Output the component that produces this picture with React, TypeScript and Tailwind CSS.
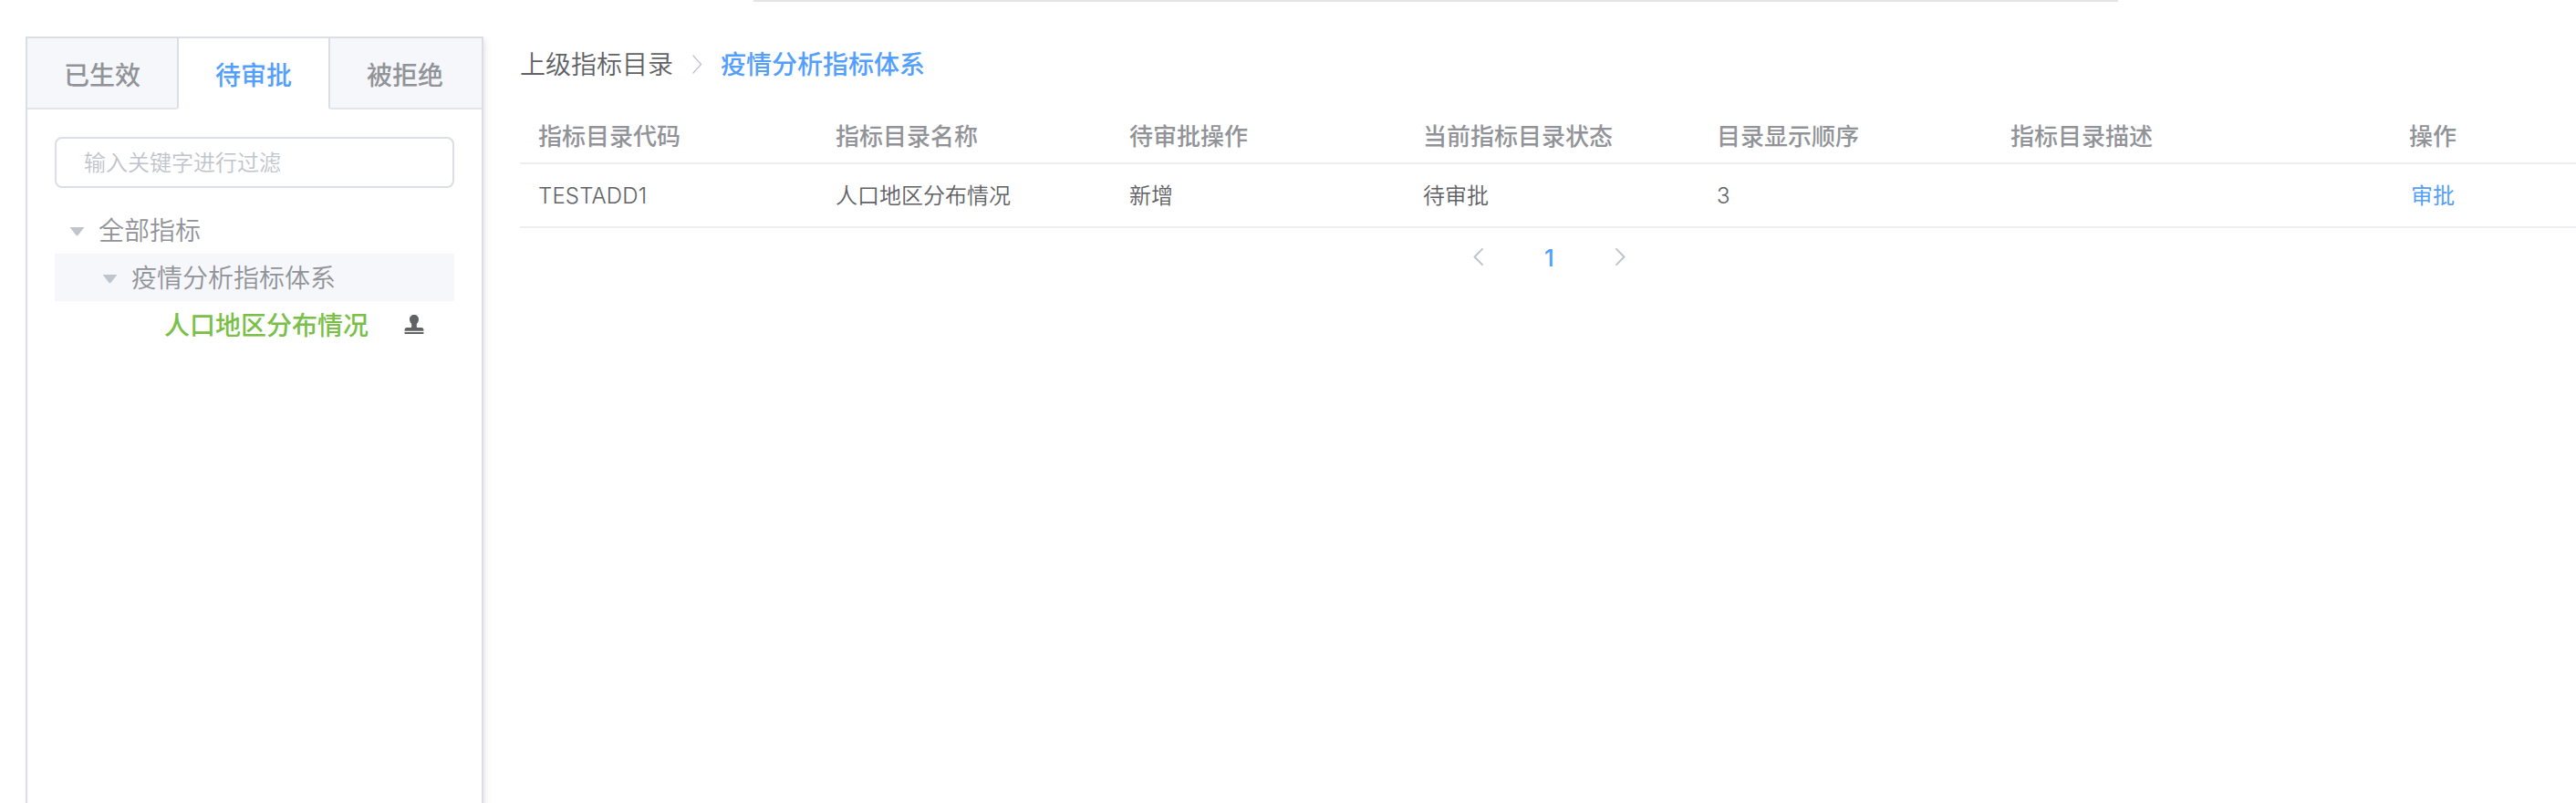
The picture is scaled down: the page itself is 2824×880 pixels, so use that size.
import type { ReactNode } from 'react';

const tabs = ['已生效', '待审批', '被拒绝'];

const columns = [
  '指标目录代码',
  '指标目录名称',
  '待审批操作',
  '当前指标目录状态',
  '目录显示顺序',
  '指标目录描述',
];

const row = ['TESTADD1', '人口地区分布情况', '新增', '待审批', '3', ''];

const gridColumns = 'grid grid-cols-[326px_322px_322px_322px_322px_322px_318px]';

function Caret() {
  return (
    <svg className="mt-[3px] h-[10px] w-[15px] shrink-0 fill-[#c0c4cc]" viewBox="0 0 15 10">
      <path d="M0 0h15v.6L8.200 9.300H6.800L0 .6z" />
    </svg>
  );
}

function Stamp() {
  return (
    <svg className="h-[22px] w-[22px] shrink-0 fill-[#606266]" viewBox="0 0 22 22">
      <path d="M11 0c2.900 0 5 2.100 5 4.900 0 2.100-1.100 3.500-1.700 4.400-.5.800-.5 1.400-.5 2.300v1.200c0 .8.4 1.200 1.200 1.200h4c1.500 0 2.500 1.100 2.500 3.200v.6H.5v-.6C.5 15.100 1.500 14 3 14h4c.8 0 1.200-.4 1.200-1.200v-1.200c0-.9 0-1.500-.5-2.300C7.100 8.400 6 7 6 4.900 6 2.100 8.100 0 11 0z" />
      <path d="M.5 19h21v1.200c0 .6-.3.800-.8.800H1.300c-.5 0-.8-.2-.8-.8z" />
    </svg>
  );
}

function Chevron({ className, left }: { className: string; left?: boolean }) {
  return (
    <svg className={className} viewBox="0 0 11 20" fill="none" preserveAspectRatio="none">
      <path d={left ? 'M10 1 1.500 10 10 19' : 'M1 1l8.500 9L1 19'} stroke="currentColor" strokeLinecap="round" strokeLinejoin="round" />
    </svg>
  );
}

function TreeRow({ className, children }: { className: string; children: ReactNode }) {
  return <div className={`flex h-[52px] items-center text-[28px] leading-[50px] ${className}`}>{children}</div>;
}

function Sidebar() {
  return (
    <aside className="mt-10 ml-7 h-[900px] w-[502px] shrink-0 border-2 border-[#dcdee5] bg-white shadow-[0_4px_8px_rgba(0,0,0,0.12),0_0_12px_rgba(0,0,0,0.04)] [clip-path:inset(0_-20px_0_0)]">
      <div className="flex h-[78px] text-[28px] leading-[78px]">
        {tabs.map((tab, i) => (
          <div
            key={tab}
            className={
              i === 1
                ? 'w-[164px] pl-10 font-medium text-[#549ffd]'
                : i === 0
                  ? 'w-[166px] rounded-br-[3px] border-r-2 border-b-2 border-r-[#dcdee5] border-b-[#e3e5ec] bg-[#f5f7fb] pl-10 font-medium text-[#919398]'
                  : 'w-[168px] rounded-bl-[3px] border-b-2 border-l-2 border-l-[#dcdee5] border-b-[#e3e5ec] bg-[#f5f7fb] pl-10 font-medium text-[#919398]'
            }
          >
            {tab}
          </div>
        ))}
      </div>
      <div className="px-[30px] pt-[30px]">
        <input
          className="block h-14 w-full rounded-lg border-2 border-[#dcdee5] px-[30px] pb-1 text-[24px] font-[350] outline-none placeholder:text-[#c0c4cc]"
          placeholder="输入关键字进行过滤"
        />
        <div className="mt-5 font-[350] text-[#919398]">
          <TreeRow className="gap-4 pl-[17px]">
            <Caret />
            <span className="-mt-0.5">全部指标</span>
          </TreeRow>
          <TreeRow className="gap-4 bg-[#f5f7fb] pl-[53px]">
            <Caret />
            <span className="-mt-0.5">疫情分析指标体系</span>
          </TreeRow>
          <TreeRow className="gap-[39px] pl-[120px]">
            <span className="-mt-0.5 font-medium text-[#79bf48]">人口地区分布情况</span>
            <Stamp />
          </TreeRow>
        </div>
      </div>
    </aside>
  );
}

function Main() {
  return (
    <main className="ml-10 w-[2254px] shrink-0">
      <div className="ml-64 h-[2px] w-[1496px] bg-[#e4e4e4]" />
      <nav className="mt-12 flex h-10 items-center text-[28px] leading-10">
        <span className="-mt-0.5 font-[350] text-[#606266]">上级指标目录</span>
        <Chevron className="mr-5 ml-[21px] h-[21px] w-[11px] stroke-[1.4] text-[#c0c4cc]" />
        <span className="-mt-0.5 font-medium text-[#549ffd]">疫情分析指标体系</span>
      </nav>
      <div className={`${gridColumns} mt-[28px] h-[62px] border-b-2 border-[#edeef4] text-[26px] leading-[60px] font-medium text-[#919398]`}>
        {columns.map((c) => (
          <div key={c} className="pl-5 whitespace-nowrap">{c}</div>
        ))}
        <div className="pl-[135px]">操作</div>
      </div>
      <div className={`${gridColumns} h-[70px] border-b-2 border-[#edeef4] text-[24px] leading-[65px] font-[350] text-[#606266]`}>
        {row.map((c, i) => (
          <div key={i} className="pl-5 whitespace-nowrap">
            {i === 0 || i === 4 ? <span className="font-['Inter'] font-[350] tracking-[0.15px]">{c}</span> : c}
          </div>
        ))}
        <div className="pl-[137px] font-normal text-[#549ffd]">审批</div>
      </div>
      <div className="ml-[1045px] flex h-[62px] w-[167px] items-center justify-between">
        <Chevron left className="h-[19px] w-[11px] stroke-2 text-[#c0c4cc]" />
        <span className="mt-1 font-['Inter'] text-[26px] leading-[30px] font-medium text-[#549ffd]">1</span>
        <Chevron className="h-[19px] w-[11px] stroke-2 text-[#c0c4cc]" />
      </div>
    </main>
  );
}

export default function App() {
  return (
    <div className="flex h-[880px] w-[2824px] overflow-hidden bg-white font-['Noto_Sans_CJK_SC',sans-serif]">
      <Sidebar />
      <Main />
    </div>
  );
}
